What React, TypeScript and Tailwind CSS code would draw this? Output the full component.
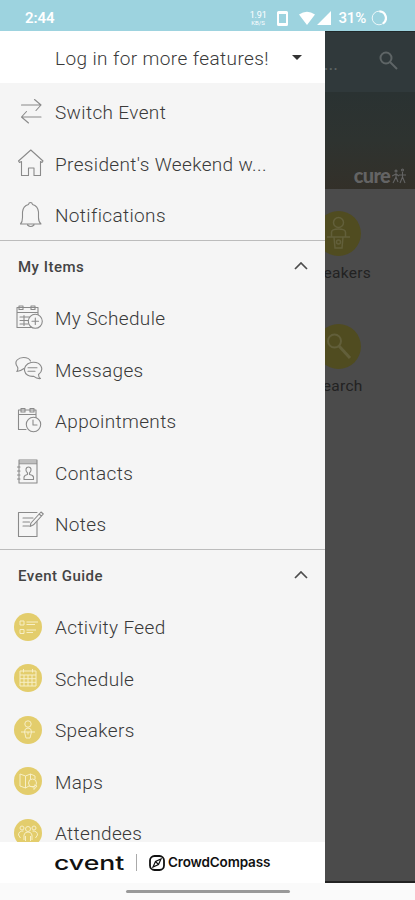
import { ReactNode } from "react";

interface MenuItem {
  label: string;
  icon: ReactNode;
}

const LineIcon = ({ children }: { children: ReactNode }) => (
  <svg
    viewBox="0 0 30 30"
    className="w-[30px] h-[30px] shrink-0"
    fill="none"
    stroke="#8a8a8a"
    strokeWidth="1.1"
    strokeLinejoin="round"
    strokeLinecap="round"
  >
    {children}
  </svg>
);

const RoundIcon = ({ children }: { children: ReactNode }) => (
  <svg
    viewBox="0 0 28 28"
    className="w-7 h-7 shrink-0"
    fill="none"
    stroke="#f7efc6"
    strokeWidth="1"
    strokeLinejoin="round"
  >
    <circle cx="14" cy="14" r="14" fill="#e3cd6c" stroke="none" />
    {children}
  </svg>
);

const eventItems: MenuItem[] = [
  {
    label: "Switch Event",
    icon: (
      <LineIcon>
        <path d="M7.5 8H27M20.5 2.500L27 8L22 13.500M27 20H7.500M12.500 14.500L7.500 20L14.500 26" />
      </LineIcon>
    ),
  },
  {
    label: "President's Weekend w...",
    icon: (
      <LineIcon>
        <path d="M4.500 13L16.800 2L29 13L28 14.500L26.500 13.500V27.500H20V20H14.500V27.500H7.500V13.500L5.500 14.500Z" />
      </LineIcon>
    ),
  },
  {
    label: "Notifications",
    icon: (
      <LineIcon>
        <path d="M6.500 24Q8.500 22 8.500 17.500V12Q9 6 14.500 4.500Q14.800 2.500 16.500 2.500T18.500 4.500Q24 6 24.500 12V17.500Q24.500 22 27 24ZM13.500 25Q16.800 28 20 25" />
      </LineIcon>
    ),
  },
];

const myItems: MenuItem[] = [
  {
    label: "My Schedule",
    icon: (
      <LineIcon>
        <path d="M19 24.500H3V4.500H24V12M3 9.500H24M5 3H9V6.500H5ZM17 3H21V6.500H17ZM6 14H16M6 17.500H14M6 21H14M10 12.500V22.500" />
        <circle cx="21.300" cy="18.300" r="7" fill="#f5f5f5" />
        <path d="M21.300 15V21.500M18 18.300H24.500" />
      </LineIcon>
    ),
  },
  {
    label: "Messages",
    icon: (
      <LineIcon>
        <path d="M10 14.500Q6 17.500 2.800 17.500Q4.500 15.500 3.500 13C-1 7 5 3.500 9.500 3.500Q15 3.500 16.500 7" />
        <path d="M24.500 20.500Q24.500 23.500 26.500 24.500Q23 25 19.800 22.300C9 23.500 7 11 17 8.500C27 7 31 15.500 24.500 20.500ZM14 13.800H23M14 17.300H21" />
      </LineIcon>
    ),
  },
  {
    label: "Appointments",
    icon: (
      <LineIcon>
        <path d="M12 23.500H4.500V4H22V12M4.500 8.500H22M7 2.500H11V6H7ZM16 2.500H20V6H16Z" />
        <circle cx="19.500" cy="18.500" r="7.200" fill="#f5f5f5" />
        <path d="M19 14V19H23" />
      </LineIcon>
    ),
  },
  {
    label: "Contacts",
    icon: (
      <LineIcon>
        <path d="M5 3H23V26H5ZM5 5H23M5 6.800H23M3.500 10H6M3.500 14H6M3.500 18H6M3.500 22H6M10 22.500V20Q10.500 18 13.500 17.500V16Q11.500 14 12 12Q12.500 10 14.500 10T17 12Q17.500 14 15.500 16V17.500Q19 18 19.500 20V22.500Z" />
      </LineIcon>
    ),
  },
  {
    label: "Notes",
    icon: (
      <LineIcon>
        <path d="M23 12.500V27.500H4.500V3.500H23M9 9H19M9 13H15.500M9 17H15" />
        <path d="M16 17.500L17 14L27 3L29.300 5L19.500 15.800ZM25 5L27.500 7" />
      </LineIcon>
    ),
  },
];

const guideItems: MenuItem[] = [
  {
    label: "Activity Feed",
    icon: (
      <RoundIcon>
        <path d="M6 8H10V12H6ZM6 16.500H10V20.500H6ZM12.500 9H24M12.500 11.500H21M12.500 17H22M12.500 19.500H19" />
      </RoundIcon>
    ),
  },
  {
    label: "Schedule",
    icon: (
      <RoundIcon>
        <path d="M6 7H22V22H6ZM6 11H22M6 14.700H22M6 18.300H22M10 11V22M14 11V22M18 11V22M9.500 5V8.500M18.500 5V8.500" />
      </RoundIcon>
    ),
  },
  {
    label: "Speakers",
    icon: (
      <RoundIcon>
        <circle cx="14" cy="8" r="3.200" />
        <path d="M7 16H21M10.500 16Q10.500 12 14 12T17.500 16M10.500 16L12 22H16L17.500 16M14 16V18.500" />
      </RoundIcon>
    ),
  },
  {
    label: "Maps",
    icon: (
      <RoundIcon>
        <path d="M15 19L11.500 21L6 19V7L11.500 9L16.500 7L21 9V12M11.500 9V21M16.500 7V12" />
        <circle cx="18.500" cy="16" r="4" />
        <path d="M15.500 19.500H20V22.500L23 19L20 18" />
      </RoundIcon>
    ),
  },
  {
    label: "Attendees",
    icon: (
      <RoundIcon>
        <circle cx="14" cy="10" r="2.500" />
        <circle cx="8" cy="9" r="2" />
        <circle cx="20" cy="9" r="2" />
        <path d="M10 21V16Q10.500 13 14 13T18 16V21M11.500 17V22M16.500 17V22M9.500 12Q4.500 12 4.500 16L6.500 19M18.500 12Q23.500 12 23.500 16L21.500 19" />
      </RoundIcon>
    ),
  },
];

const StatusBar = () => (
  <header className="h-[31px] shrink-0 bg-[#9dd3df] text-white flex items-center justify-between pl-[25px] pr-[28px] pt-[5px]">
    <span className="text-[15px] font-semibold tracking-[-0.1px]">2:44</span>
    <div className="flex items-center">
      <div className="flex flex-col items-center mr-[10px]">
        <span className="text-[9px] leading-[10px] tracking-[-0.200px]">1.91</span>
        <span className="text-[6px] leading-[6px]">KB/S</span>
      </div>
      <svg viewBox="0 0 11 15" className="w-[11px] h-[15px] mr-[11px]">
        <path fill="currentColor" fillRule="evenodd" d="M1.500 0H9.500Q11 0 11 1.500V13.500Q11 15 9.500 15H1.500Q0 15 0 13.500V1.500Q0 0 1.500 0ZM2 3V12H9V3Z" />
      </svg>
      <svg viewBox="0 0 33 15" className="w-[33px] h-[15px] mr-[7px]" fill="currentColor">
        <path d="M0 3.500Q8 -2 16 3.500L8 14ZM32 0V14H18Z" />
      </svg>
      <span className="text-[15px] font-medium tracking-[-0.200px] mr-[5px]">31%</span>
      <svg viewBox="0 0 16 16" className="w-4 h-4" fill="none" stroke="currentColor">
        <circle cx="8" cy="8" r="6.800" strokeWidth="1" opacity="0.800" />
        <path d="M8.500 1.300A6.700 6.700 0 0 1 12 13.500" strokeWidth="2.200" />
      </svg>
    </div>
  </header>
);

const MenuRow = ({ item }: { item: MenuItem }) => (
  <li className="h-[51.500px] flex items-center pl-[14px] pt-[2px]">
    <div className="w-[41px] shrink-0">{item.icon}</div>
    <span className="pt-[2px] text-[19px] leading-none font-light text-[#3a3a3a] tracking-[0.360px] whitespace-nowrap">{item.label}</span>
  </li>
);

const MenuSection = ({ title, items }: { title: string; items: MenuItem[] }) => (
  <section className="border-t border-[#bcbcbc]">
    <div className="h-[50.500px] flex items-center justify-between pl-[18px] pr-[17px]">
      <h2 className="pt-[2px] text-[15px] font-medium text-[#444] tracking-[0.500px]">{title}</h2>
      <svg viewBox="0 0 14 8" className="w-[14px] h-2" fill="none" stroke="#4c4c4c" strokeWidth="1.700">
        <path d="M1 7L7 1L13 7" />
      </svg>
    </div>
    <ul>
      {items.map(item => (
        <MenuRow key={item.label} item={item} />
      ))}
    </ul>
  </section>
);

const Drawer = () => (
  <aside className="absolute left-0 top-0 w-[325px] h-full flex flex-col bg-[#f5f5f5] overflow-hidden">
    <div className="h-[52px] shrink-0 bg-white flex items-center justify-between pl-[55px] pr-[23px] pt-[2px]">
      <span className="pt-[2px] text-[19px] font-light text-[#3a3a3a] tracking-[0.400px] whitespace-nowrap">Log in for more features!</span>
      <svg viewBox="0 0 10 5" className="w-[10px] h-[5px] mb-[2px]" fill="#333">
        <path d="M0 0H10L5 5Z" />
      </svg>
    </div>
    <nav className="flex-1 min-h-0 overflow-hidden pt-[2px]">
      <ul>
        {eventItems.map(item => (
          <MenuRow key={item.label} item={item} />
        ))}
      </ul>
      <MenuSection title="My Items" items={myItems} />
      <MenuSection title="Event Guide" items={guideItems} />
    </nav>
    <footer className="h-[41px] shrink-0 bg-white flex items-center pl-[54px] text-[#111]">
      <span className="w-[70px] text-[20px] font-medium font-[Inter] leading-none">
        <span className="inline-block origin-left scale-x-[1.330]">cvent</span>
      </span>
      <span className="w-px h-[17px] bg-[#aaa] ml-[12px] mr-[12px]" />
      <svg viewBox="0 0 16 16" className="w-4 h-4 mr-[3px]" fill="none" stroke="#111">
        <rect x="1" y="1" width="14" height="14" rx="4.500" strokeWidth="1.800" />
        <path d="M12 4L9.500 9.500L4 12L6.500 6.500ZM6.500 6.500L9.500 9.500" strokeWidth="1.200" />
      </svg>
      <span className="text-[13.500px] font-semibold font-[Inter] tracking-[-0.150px]">CrowdCompass</span>
    </footer>
  </aside>
);

// Event home screen, dimmed while the drawer is open
const EventHome = () => (
  <main className="h-full bg-[#4b4b4b] border-b-2 border-[#222] flex flex-col text-[#222]">
    <div className="h-[61px] shrink-0 bg-[#30393b] border-t border-[#202829] flex items-center justify-end pr-[17px] gap-[41px] text-[#5e6566]">
      <span className="text-[18px] leading-none pt-[3px]">...</span>
      <svg viewBox="0 0 19 19" className="w-[19px] h-[19px] mb-[4px]" fill="none" stroke="currentColor" strokeWidth="2">
        <circle cx="7" cy="7" r="5.500" />
        <path d="M11 11L18 18" />
      </svg>
    </div>
    <div className="h-[97px] shrink-0 bg-gradient-to-b from-[#2a3232] via-[#2e3330] to-[#333029] flex items-end justify-end pr-[9px] pb-[4px] text-[#646464]">
      <span className="text-[20px] leading-[20px] font-black font-[Lato] tracking-[-0.700px] mr-[2px]">cure</span>
      <svg viewBox="0 0 14 16" className="w-[14px] h-4 mb-[1px]" fill="none" stroke="currentColor" strokeWidth="1.100">
        <path d="M4 5V9L1 15M4 9L6 14M0 8L4 6L7 8M10.500 4V9L8 15M10.500 9L13 15M7 7H14" />
        <circle cx="4" cy="3" r="1" />
        <circle cx="10.500" cy="2" r="1" />
      </svg>
    </div>
    <div className="self-end w-[154px] flex flex-col items-center pt-[22px]">
      <svg viewBox="0 0 45 45" className="w-[45px] h-[45px]" fill="none" stroke="#625f3a" strokeWidth="1.500">
        <circle cx="22.500" cy="22.500" r="22.500" fill="#504c20" stroke="none" />
        <circle cx="22.500" cy="11.500" r="5" />
        <path d="M11 26H34M15.500 26V21Q16 18 22.500 18T29.500 21V26M18 26L19 37H26L27 26" />
        <circle cx="22.500" cy="31" r="2" />
      </svg>
      <span className="text-[15.500px] leading-5 mt-[7px] tracking-[0.300px]">Speakers</span>
      <svg viewBox="0 0 45 45" className="w-[45px] h-[45px] mt-[41px]" fill="none" stroke="#625f3a" strokeWidth="2">
        <circle cx="22.500" cy="22.500" r="22.500" fill="#504c20" stroke="none" />
        <circle cx="18.500" cy="17" r="6.500" />
        <path d="M23 22L34 34" strokeWidth="3" />
      </svg>
      <span className="text-[15.500px] leading-5 mt-[7px] tracking-[0.300px]">Search</span>
    </div>
  </main>
);

const App = () => {
  return (
    <div className="w-[415px] h-[900px] overflow-hidden flex flex-col bg-[#fafafa] font-[Roboto,sans-serif]">
      <StatusBar />
      <div className="relative h-[852px] shrink-0">
        <EventHome />
        <Drawer />
      </div>
      <div className="flex-1 flex items-center justify-center">
        <div className="w-[164px] h-[3px] rounded-full bg-[#999]" />
      </div>
    </div>
  );
};

export default App;
